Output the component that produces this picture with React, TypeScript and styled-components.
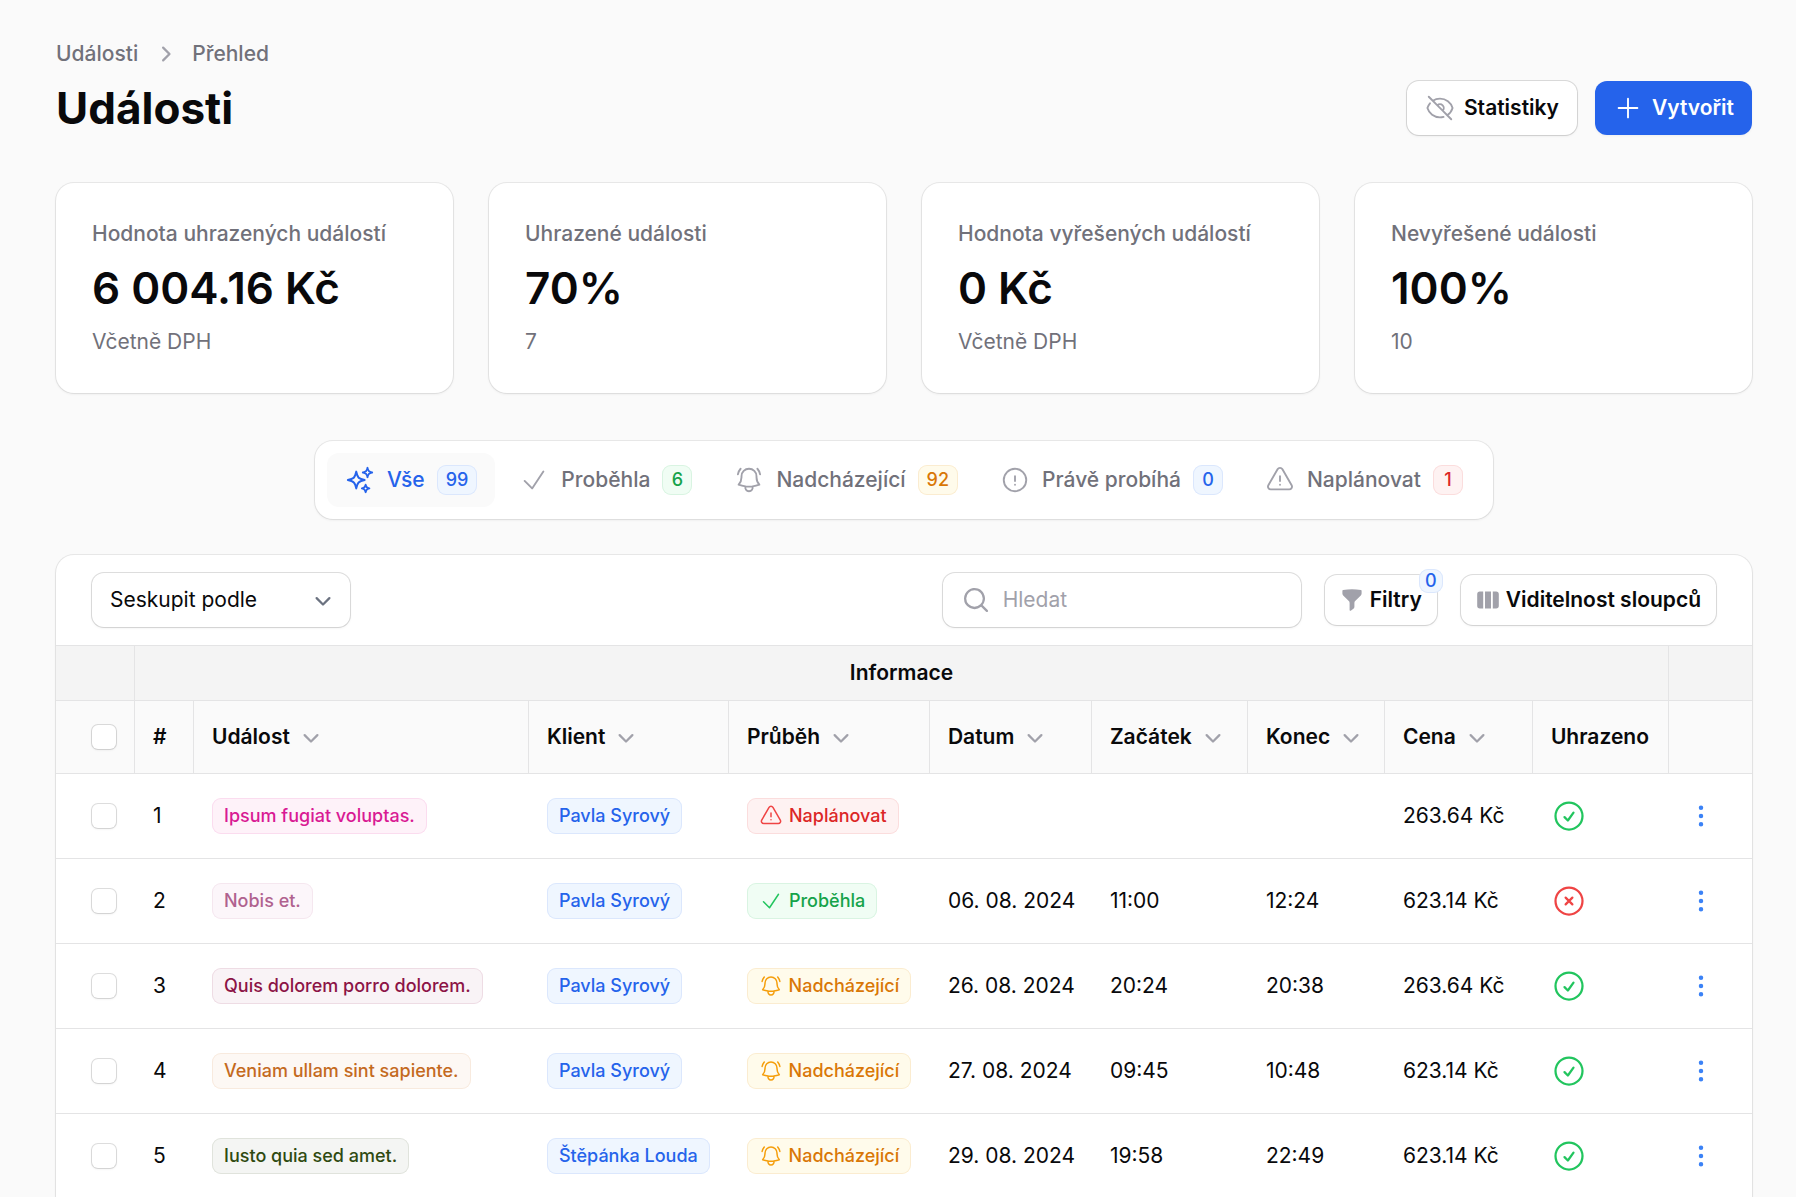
import React from "react";
import styled, { createGlobalStyle, css } from "styled-components";
import {
  HiOutlineEyeSlash,
  HiOutlinePlus,
  HiOutlineSparkles,
  HiOutlineCheck,
  HiOutlineBellAlert,
  HiOutlineExclamationCircle,
  HiOutlineExclamationTriangle,
  HiOutlineCheckCircle,
  HiOutlineXCircle,
  HiMiniChevronDown,
  HiMiniChevronRight,
  HiMiniMagnifyingGlass,
  HiMiniFunnel,
  HiMiniViewColumns,
  HiMiniEllipsisVertical,
} from "react-icons/hi2";

const GlobalStyle = createGlobalStyle`
  *, *::before, *::after { box-sizing: border-box; }
  body {
    margin: 0;
    background: #fafafa;
    color: #09090b;
    font-family: Inter, "Liberation Sans", sans-serif;
    font-size: 21px;
    line-height: 30px;
  }
  button, input, select { font: inherit; color: inherit; margin: 0; }
  button { cursor: pointer; }
`;

const iconSize = (px: number) => css`
  & > svg {
    flex: none;
    width: ${px}px;
    height: ${px}px;
  }
`;

const cardSurface = css`
  background: #fff;
  box-shadow: 0 0 0 1px rgba(9, 9, 11, 0.07), 0 1px 3px rgba(0, 0, 0, 0.08);
`;

const fieldSurface = css`
  background: #fff;
  border: 0;
  border-radius: 12px;
  box-shadow: 0 0 0 1px rgba(9, 9, 11, 0.13), 0 1px 3px rgba(0, 0, 0, 0.08);
`;

const Page = styled.main`
  display: flex;
  flex-direction: column;
  padding: 39px 44px 48px 56px;
`;

const Breadcrumbs = styled.nav`
  display: flex;
  align-items: center;
  gap: 12px;
  margin-bottom: 12px;
  color: #71717a;
  font-weight: 500;

  a { color: inherit; text-decoration: none; }
  svg { color: #a1a1aa; }
  ${iconSize(30)}
`;

const Header = styled.header`
  display: flex;
  align-items: center;
  justify-content: space-between;
  margin-bottom: 48px;
`;

const Title = styled.h1`
  margin: 0;
  font-size: 44px;
  line-height: 54px;
  font-weight: 700;
`;

const Actions = styled.div`
  display: flex;
  gap: 18px;
`;

const ActionButton = styled.button<{ $primary?: boolean }>`
  display: inline-flex;
  align-items: center;
  gap: 9px;
  height: 54px;
  padding: 0 18px;
  font-weight: 600;
  ${fieldSurface}
  svg { color: #a1a1aa; }
  ${iconSize(30)}
  ${(p) =>
    p.$primary &&
    css`
      background: #2563eb;
      color: #fff;
      box-shadow: 0 1px 3px rgba(0, 0, 0, 0.05);
      svg { color: #fff; }
    `}
`;

const Stats = styled.section`
  display: grid;
  grid-template-columns: repeat(4, 1fr);
  gap: 36px;
  margin-bottom: 48px;
`;

const StatCard = styled.article`
  display: flex;
  flex-direction: column;
  gap: 12px;
  padding: 36px;
  border-radius: 18px;
  ${cardSurface}
`;

const StatLabel = styled.div`
  color: #71717a;
  font-weight: 500;
`;

const StatValue = styled.div`
  font-size: 44px;
  line-height: 54px;
  font-weight: 600;
`;

const StatNote = styled.div`
  color: #71717a;
`;

const Tabs = styled.div`
  display: flex;
  align-self: center;
  gap: 6px;
  margin-bottom: 36px;
  padding: 12px;
  border-radius: 18px;
  ${cardSurface}
`;

const Tab = styled.button<{ $active?: boolean }>`
  display: inline-flex;
  align-items: center;
  gap: 12px;
  height: 54px;
  padding: 0 18px;
  border: 0;
  border-radius: 12px;
  background: ${(p) => (p.$active ? "#fafafa" : "transparent")};
  color: ${(p) => (p.$active ? "#2563eb" : "#71717a")};
  font-weight: 500;
  svg { color: ${(p) => (p.$active ? "#2563eb" : "#a1a1aa")}; }
  ${iconSize(30)}
`;

type Tone = { text: string; bg: string; ring: string; icon?: string };

const tones = {
  blue: { text: "#2563eb", bg: "#eff6ff", ring: "#dbe7fd" },
  green: { text: "#16a34a", bg: "#f0fdf4", ring: "#d9f4e2", icon: "#22c55e" },
  amber: { text: "#d97706", bg: "#fffbeb", ring: "#fbecd0", icon: "#f59e0b" },
  red: { text: "#dc2626", bg: "#fef2f2", ring: "#fbdddd", icon: "#ef4444" },
  magenta: { text: "#d91a94", bg: "#fef2f9", ring: "#fbdcef" },
  mauve: { text: "#b0628f", bg: "#fcf6fa", ring: "#f5e7ef" },
  wine: { text: "#8c1446", bg: "#f9f3f6", ring: "#eedce4" },
  orange: { text: "#c46a1e", bg: "#fdf8f4", ring: "#f8eade" },
  olive: { text: "#2f4a10", bg: "#f4f5f3", ring: "#e0e3dc" },
} satisfies Record<string, Tone>;

type ToneName = keyof typeof tones;

const Badge = styled.span<{ $tone: Tone; $size?: "count" | "label" | "corner" }>`
  display: inline-flex;
  align-items: center;
  justify-content: center;
  gap: 6px;
  min-width: 30px;
  height: ${(p) => (p.$size === "label" ? 36 : p.$size === "corner" ? 24 : 30)}px;
  padding: 0 ${(p) => (p.$size === "label" ? 12 : 9)}px;
  border-radius: 9px;
  background: ${(p) => p.$tone.bg};
  color: ${(p) => p.$tone.text};
  box-shadow: inset 0 0 0 1px ${(p) => p.$tone.ring};
  font-size: 18px;
  line-height: 24px;
  font-weight: 500;
  white-space: nowrap;
  && svg { color: ${(p) => p.$tone.icon ?? p.$tone.text}; }
  ${iconSize(24)}
  ${(p) =>
    p.$size === "corner" &&
    css`
      position: absolute;
      top: -6px;
      right: -6px;
      min-width: 24px;
      padding: 0 6px;
    `}
`;

const Panel = styled.section`
  border-radius: 18px 18px 0 0;
  ${cardSurface}
`;

const Toolbar = styled.div`
  display: flex;
  align-items: center;
  gap: 24px;
  padding: 18px 36px;
`;

const SelectWrap = styled.label`
  position: relative;
  width: 258px;
  margin-right: auto;

  svg {
    position: absolute;
    top: 12px;
    right: 12px;
    width: 30px;
    height: 30px;
    color: #6b7280;
    pointer-events: none;
  }
`;

const Select = styled.select`
  appearance: none;
  display: block;
  width: 100%;
  height: 54px;
  padding: 0 48px 0 18px;
  ${fieldSurface}
`;

const SearchBox = styled.label`
  display: flex;
  align-items: center;
  gap: 12px;
  width: 358px;
  height: 54px;
  padding: 0 18px;
  ${fieldSurface}
  svg { color: #a1a1aa; }
  ${iconSize(30)}
`;

const SearchInput = styled.input`
  flex: 1;
  min-width: 0;
  padding: 0;
  border: 0;
  outline: 0;
  background: transparent;
  &::placeholder { color: #a1a1aa; opacity: 1; }
`;

const ToolButton = styled.button`
  position: relative;
  display: inline-flex;
  align-items: center;
  gap: 6px;
  height: 50px;
  padding: 0 15px;
  font-weight: 600;
  white-space: nowrap;
  ${fieldSurface}
  svg { color: #a1a1aa; }
  ${iconSize(24)}
`;

const Table = styled.table`
  width: 100%;
  table-layout: fixed;
  border-collapse: separate;
  border-spacing: 0;
`;

const Col = styled.col<{ $w?: number }>`
  width: ${(p) => (p.$w ? `${p.$w}px` : "auto")};
`;

const HeadCell = styled.th<{ $group?: boolean }>`
  height: ${(p) => (p.$group ? 55 : 73)}px;
  padding: 0 18px;
  border-top: 1px solid #e4e4e5;
  border-left: 1px solid #e4e4e5;
  background: ${(p) => (p.$group ? "#f4f4f4" : "#fafafa")};
  font-weight: 600;
  text-align: ${(p) => (p.$group ? "center" : "left")};
  white-space: nowrap;
  &:first-child { border-left: 0; padding: 0 18px 0 36px; }
`;

const SortButton = styled.button`
  display: flex;
  align-items: center;
  gap: 6px;
  padding: 0;
  border: 0;
  background: none;
  font-weight: 600;
  svg { color: #a1a1aa; }
  ${iconSize(30)}
`;

const Cell = styled.td`
  height: 85px;
  padding: 0 18px 0 19px;
  border-top: 1px solid #e4e4e5;
  white-space: nowrap;
  &:first-child { padding-left: 36px; }
  &:last-child { padding-right: 36px; }
`;

const CellBox = styled.div<{ $end?: boolean }>`
  display: flex;
  align-items: center;
  justify-content: ${(p) => (p.$end ? "flex-end" : "flex-start")};
`;

const Checkbox = styled.input`
  appearance: none;
  display: block;
  width: 24px;
  height: 24px;
  margin: 0;
  border-radius: 6px;
  background: #fff;
  box-shadow: 0 0 0 1px rgba(9, 9, 11, 0.13), 0 1px 3px rgba(0, 0, 0, 0.08);
  &:checked { background: #2563eb; }
`;

const PaidIcon = styled.span<{ $paid: boolean }>`
  display: flex;
  color: ${(p) => (p.$paid ? "#22c55e" : "#ef4444")};
  ${iconSize(36)}
`;

const MenuButton = styled.button`
  display: flex;
  padding: 0;
  border: 0;
  background: none;
  color: #3b82f6;
  ${iconSize(30)}
`;

const stats = [
  { label: "Hodnota uhrazených událostí", value: "6 004.16 Kč", note: "Včetně DPH" },
  { label: "Uhrazené události", value: "70%", note: "7" },
  { label: "Hodnota vyřešených událostí", value: "0 Kč", note: "Včetně DPH" },
  { label: "Nevyřešené události", value: "100%", note: "10" },
];

const tabs: { label: string; count: number; tone: ToneName; icon: React.ReactNode }[] = [
  { label: "Vše", count: 99, tone: "blue", icon: <HiOutlineSparkles /> },
  { label: "Proběhla", count: 6, tone: "green", icon: <HiOutlineCheck /> },
  { label: "Nadcházející", count: 92, tone: "amber", icon: <HiOutlineBellAlert /> },
  { label: "Právě probíhá", count: 0, tone: "blue", icon: <HiOutlineExclamationCircle /> },
  { label: "Naplánovat", count: 1, tone: "red", icon: <HiOutlineExclamationTriangle /> },
];

const statuses = {
  plan: { label: "Naplánovat", tone: tones.red, icon: <HiOutlineExclamationTriangle /> },
  done: { label: "Proběhla", tone: tones.green, icon: <HiOutlineCheck /> },
  next: { label: "Nadcházející", tone: tones.amber, icon: <HiOutlineBellAlert /> },
};

type Event = {
  id: number;
  name: string;
  tone: ToneName;
  client: string;
  status: keyof typeof statuses;
  date: string;
  start: string;
  end: string;
  price: string;
  paid: boolean;
};

const events: Event[] = [
  { id: 1, name: "Ipsum fugiat voluptas.", tone: "magenta", client: "Pavla Syrový", status: "plan", date: "", start: "", end: "", price: "263.64 Kč", paid: true },
  { id: 2, name: "Nobis et.", tone: "mauve", client: "Pavla Syrový", status: "done", date: "06. 08. 2024", start: "11:00", end: "12:24", price: "623.14 Kč", paid: false },
  { id: 3, name: "Quis dolorem porro dolorem.", tone: "wine", client: "Pavla Syrový", status: "next", date: "26. 08. 2024", start: "20:24", end: "20:38", price: "263.64 Kč", paid: true },
  { id: 4, name: "Veniam ullam sint sapiente.", tone: "orange", client: "Pavla Syrový", status: "next", date: "27. 08. 2024", start: "09:45", end: "10:48", price: "623.14 Kč", paid: true },
  { id: 5, name: "Iusto quia sed amet.", tone: "olive", client: "Štěpánka Louda", status: "next", date: "29. 08. 2024", start: "19:58", end: "22:49", price: "623.14 Kč", paid: true },
];

const columns: { label: string; sortable?: boolean }[] = [
  { label: "#" },
  { label: "Událost", sortable: true },
  { label: "Klient", sortable: true },
  { label: "Průběh", sortable: true },
  { label: "Datum", sortable: true },
  { label: "Začátek", sortable: true },
  { label: "Konec", sortable: true },
  { label: "Cena", sortable: true },
  { label: "Uhrazeno" },
];

const columnWidths = [78, 59, undefined, 200, 201, 162, 156, 137, 148, 136, 84];

export default function App() {
  return (
    <>
      <GlobalStyle />
      <Page>
        <Breadcrumbs aria-label="Breadcrumb">
          <a href="#udalosti">Události</a>
          <HiMiniChevronRight />
          <a href="#prehled">Přehled</a>
        </Breadcrumbs>
        <Header>
          <Title>Události</Title>
          <Actions>
            <ActionButton type="button">
              <HiOutlineEyeSlash />
              Statistiky
            </ActionButton>
            <ActionButton type="button" $primary>
              <HiOutlinePlus />
              Vytvořit
            </ActionButton>
          </Actions>
        </Header>

        <Stats>
          {stats.map((s) => (
            <StatCard key={s.label}>
              <StatLabel>{s.label}</StatLabel>
              <StatValue>{s.value}</StatValue>
              <StatNote>{s.note}</StatNote>
            </StatCard>
          ))}
        </Stats>

        <Tabs role="tablist">
          {tabs.map((t, i) => (
            <Tab key={t.label} type="button" role="tab" aria-selected={i === 0} $active={i === 0}>
              {t.icon}
              {t.label}
              <Badge $tone={tones[t.tone]}>{t.count}</Badge>
            </Tab>
          ))}
        </Tabs>

        <Panel>
          <Toolbar>
            <SelectWrap>
              <Select aria-label="Seskupit podle" defaultValue="">
                <option value="">Seskupit podle</option>
                <option value="klient">Klient</option>
              </Select>
              <HiMiniChevronDown />
            </SelectWrap>
            <SearchBox>
              <HiMiniMagnifyingGlass />
              <SearchInput type="text" aria-label="Hledat" placeholder="Hledat" />
            </SearchBox>
            <ToolButton type="button">
              <HiMiniFunnel />
              Filtry
              <Badge $tone={tones.blue} $size="corner">0</Badge>
            </ToolButton>
            <ToolButton type="button">
              <HiMiniViewColumns />
              Viditelnost sloupců
            </ToolButton>
          </Toolbar>

          <Table>
            <colgroup>
              {columnWidths.map((w, i) => (
                <Col key={i} $w={w} />
              ))}
            </colgroup>
            <thead>
              <tr>
                <HeadCell $group />
                <HeadCell $group colSpan={9} scope="colgroup">Informace</HeadCell>
                <HeadCell $group />
              </tr>
              <tr>
                <HeadCell>
                  <Checkbox type="checkbox" aria-label="Vybrat vše" />
                </HeadCell>
                {columns.map((c) => (
                  <HeadCell key={c.label} scope="col">
                    {c.sortable ? (
                      <SortButton type="button">
                        {c.label}
                        <HiMiniChevronDown />
                      </SortButton>
                    ) : (
                      c.label
                    )}
                  </HeadCell>
                ))}
                <HeadCell />
              </tr>
            </thead>
            <tbody>
              {events.map((e) => {
                const status = statuses[e.status];
                return (
                  <tr key={e.id}>
                    <Cell>
                      <Checkbox type="checkbox" aria-label={`Vybrat ${e.id}`} />
                    </Cell>
                    <Cell>{e.id}</Cell>
                    <Cell>
                      <CellBox>
                        <Badge $tone={tones[e.tone]} $size="label">{e.name}</Badge>
                      </CellBox>
                    </Cell>
                    <Cell>
                      <CellBox>
                        <Badge $tone={tones.blue} $size="label">{e.client}</Badge>
                      </CellBox>
                    </Cell>
                    <Cell>
                      <CellBox>
                        <Badge $tone={status.tone} $size="label">
                          {status.icon}
                          {status.label}
                        </Badge>
                      </CellBox>
                    </Cell>
                    <Cell>{e.date}</Cell>
                    <Cell>{e.start}</Cell>
                    <Cell>{e.end}</Cell>
                    <Cell>{e.price}</Cell>
                    <Cell>
                      <PaidIcon $paid={e.paid} role="img" aria-label={e.paid ? "Ano" : "Ne"}>
                        {e.paid ? <HiOutlineCheckCircle /> : <HiOutlineXCircle />}
                      </PaidIcon>
                    </Cell>
                    <Cell>
                      <CellBox $end>
                        <MenuButton type="button" aria-label="Akce">
                          <HiMiniEllipsisVertical />
                        </MenuButton>
                      </CellBox>
                    </Cell>
                  </tr>
                );
              })}
            </tbody>
          </Table>
        </Panel>
      </Page>
    </>
  );
}
